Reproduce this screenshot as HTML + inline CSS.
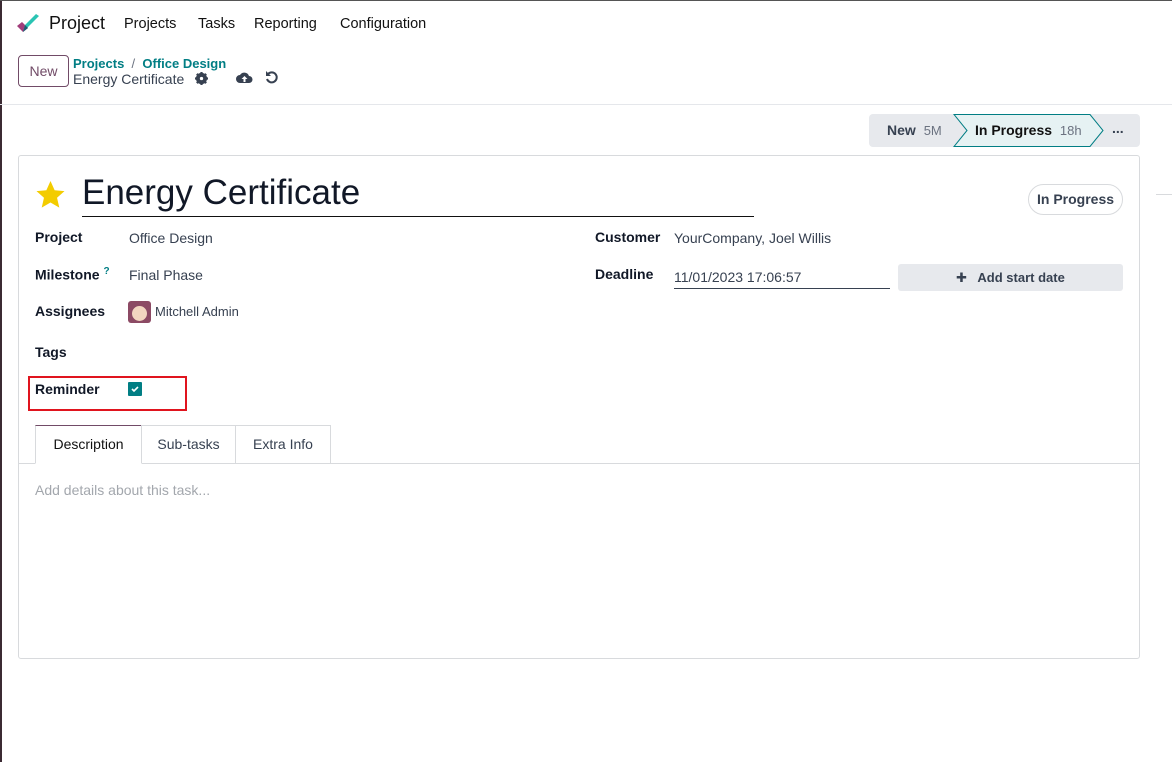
<!DOCTYPE html>
<html><head><meta charset="utf-8"><style>
*{box-sizing:border-box;margin:0;padding:0}
body{width:1172px;height:762px;overflow:hidden;background:#fff;font-family:"Liberation Sans","DejaVu Sans",sans-serif;color:#374151;position:relative;font-size:14px}
.abs{position:absolute}
.lb{font-weight:bold;color:#111827;font-size:14px}
.v{color:#374151;font-size:14px}
</style></head><body>
<div class="abs" style="left:0;top:0;width:2px;height:762px;background:#3b2a33"></div>
<div class="abs" style="left:0;top:0;width:1172px;height:1px;background:#555"></div>
<svg class="abs" style="left:17px;top:14px" width="24" height="20" viewBox="0 0 24 20"><path d="M0 12l5-4 6 6-5 4z" fill="#a13d7b"/><path d="M6 18l5-5 11-11-3-2-11 11z" fill="#2ac4b3"/><path d="M6 18l5-4-3-3z" fill="#1f5c73"/></svg>
<div class="abs" style="left:49px;top:13px;font-size:18px;color:#111">Project</div>
<div class="abs" style="left:124px;top:16px;font-size:14.5px;color:#111">Projects</div>
<div class="abs" style="left:198px;top:16px;font-size:14.5px;color:#111">Tasks</div>
<div class="abs" style="left:254px;top:16px;font-size:14.5px;color:#111">Reporting</div>
<div class="abs" style="left:340px;top:16px;font-size:14.5px;color:#111">Configuration</div>
<div class="abs" style="left:18px;top:55px;width:51px;height:32px;border:1px solid #714b67;border-radius:4px;color:#714b67;font-size:14px;text-align:center;line-height:30px">New</div>
<div class="abs" style="left:73px;top:56px;font-size:13px;font-weight:bold;color:#017e84">Projects <span style="color:#6b7280;font-weight:normal">&nbsp;/&nbsp;</span> Office Design</div>
<div class="abs" style="left:73px;top:71px;font-size:14px;color:#374151">Energy Certificate</div>
<svg class="abs" style="left:195px;top:72px" width="13" height="13" viewBox="0 0 14 14"><circle cx="7" cy="7" r="4.5" fill="none" stroke="#374151" stroke-width="3"/><path d="M7 0v14M0 7h14M2 2l10 10M12 2L2 12" stroke="#374151" stroke-width="2.4"/><circle cx="7" cy="7" r="1.8" fill="#fff"/></svg>
<svg class="abs" style="left:236px;top:71px" width="17" height="13" viewBox="0 0 17 13"><path d="M4 12a4 4 0 0 1 0-8 5 5 0 0 1 9 1 3.5 3.5 0 0 1 0 7z" fill="#374151"/><path d="M8.5 5l-3 3h2v3h2V8h2z" fill="#fff"/></svg>
<svg class="abs" style="left:265px;top:70px" width="14" height="14" viewBox="0 0 14 14"><path d="M3 4a5 5 0 1 1-1 5" stroke="#374151" stroke-width="2" fill="none"/><path d="M1 1v5h5z" fill="#374151"/></svg>
<div class="abs" style="left:0;top:104px;width:1172px;height:1px;background:#e5e7eb"></div>
<div class="abs" style="left:869px;top:114px;width:271px;height:33px;background:#e7e9ed;border-radius:4px"></div>
<svg class="abs" style="left:953px;top:114px" width="152" height="33"><path d="M1 0.5H137L150 16.5 137 32.5H1L14 16.5Z" fill="#e6f2f3" stroke="#017e84"/></svg>
<div class="abs" style="left:887px;top:122px;font-size:14px;font-weight:bold;color:#374151">New <span style="font-weight:normal;color:#6b7280;font-size:13px;margin-left:4px">5M</span></div>
<div class="abs" style="left:975px;top:122px;font-size:14px;font-weight:bold;color:#111">In Progress <span style="font-weight:normal;color:#6b7280;font-size:13px;margin-left:4px">18h</span></div>
<div class="abs" style="left:1112px;top:120px;font-size:14px;font-weight:bold;color:#374151">...</div>
<div class="abs" style="left:18px;top:155px;width:1122px;height:504px;border:1px solid #d8dadd;border-radius:3px;background:#fff"></div>
<div class="abs" style="left:1156px;top:194px;width:16px;height:1px;background:#d8dadd"></div>
<svg class="abs" style="left:34px;top:179px" width="33" height="32" viewBox="0 0 24 24"><path d="M12 1.5l3.1 6.9 7.4.7-5.6 5 1.7 7.4L12 17.6l-6.6 3.9 1.7-7.4-5.6-5 7.4-.7z" fill="#f3cc00"/></svg>
<div class="abs" style="left:82px;top:173px;font-size:35px;color:#111827">Energy Certificate</div>
<div class="abs" style="left:82px;top:216px;width:672px;height:1px;background:#111"></div>
<div class="abs" style="left:1028px;top:184px;width:95px;height:31px;border:1px solid #d8dadd;border-radius:16px;text-align:center;line-height:29px;font-size:14px;font-weight:bold;color:#374151">In Progress</div>
<div class="abs lb" style="left:35px;top:229px">Project</div>
<div class="abs v" style="left:129px;top:230px">Office Design</div>
<div class="abs lb" style="left:35px;top:266px">Milestone <sup style="color:#017e84;font-size:10px">?</sup></div>
<div class="abs v" style="left:129px;top:267px">Final Phase</div>
<div class="abs lb" style="left:35px;top:303px">Assignees</div>
<div class="abs" style="left:128px;top:301px;width:23px;height:22px;background:#8c4a64;border-radius:3px;overflow:hidden"><div style="margin:5px 0 0 4px;width:15px;height:15px;background:#f2d6c0;border-radius:50%"></div></div>
<div class="abs v" style="left:155px;top:304px;font-size:13px">Mitchell Admin</div>
<div class="abs lb" style="left:35px;top:344px">Tags</div>
<div class="abs lb" style="left:35px;top:381px">Reminder</div>
<div class="abs" style="left:128px;top:382px;width:14px;height:14px;background:#017e84;border-radius:1px"><svg width="14" height="14"><path d="M4 7l2 2 4-4" stroke="#fff" stroke-width="1.6" fill="none"/></svg></div>
<div class="abs" style="left:28px;top:376px;width:159px;height:35px;border:2px solid #e0141e"></div>
<div class="abs lb" style="left:595px;top:229px">Customer</div>
<div class="abs v" style="left:674px;top:230px">YourCompany, Joel Willis</div>
<div class="abs lb" style="left:595px;top:266px">Deadline</div>
<div class="abs v" style="left:674px;top:269px">11/01/2023 17:06:57</div>
<div class="abs" style="left:674px;top:288px;width:216px;height:1px;background:#374151"></div>
<div class="abs" style="left:898px;top:264px;width:225px;height:27px;background:#e7e9ed;border-radius:3px;text-align:center;line-height:27px;font-size:13px;font-weight:bold;color:#374151">✚&nbsp;&nbsp; Add start date</div>
<div class="abs" style="left:19px;top:463px;width:1120px;height:1px;background:#d8dadd"></div>
<div class="abs" style="left:35px;top:425px;width:107px;height:39px;border:1px solid #d8dadd;border-bottom:1px solid #fff;border-top:1px solid #714b67;background:#fff;text-align:center;line-height:37px;color:#111">Description</div>
<div class="abs" style="left:141px;top:425px;width:95px;height:38px;border:1px solid #d8dadd;border-bottom:none;text-align:center;line-height:37px">Sub-tasks</div>
<div class="abs" style="left:235px;top:425px;width:96px;height:38px;border:1px solid #d8dadd;border-bottom:none;text-align:center;line-height:37px">Extra Info</div>
<div class="abs" style="left:35px;top:482px;color:#a3a7ad;font-size:14px">Add details about this task...</div>
</body></html>
